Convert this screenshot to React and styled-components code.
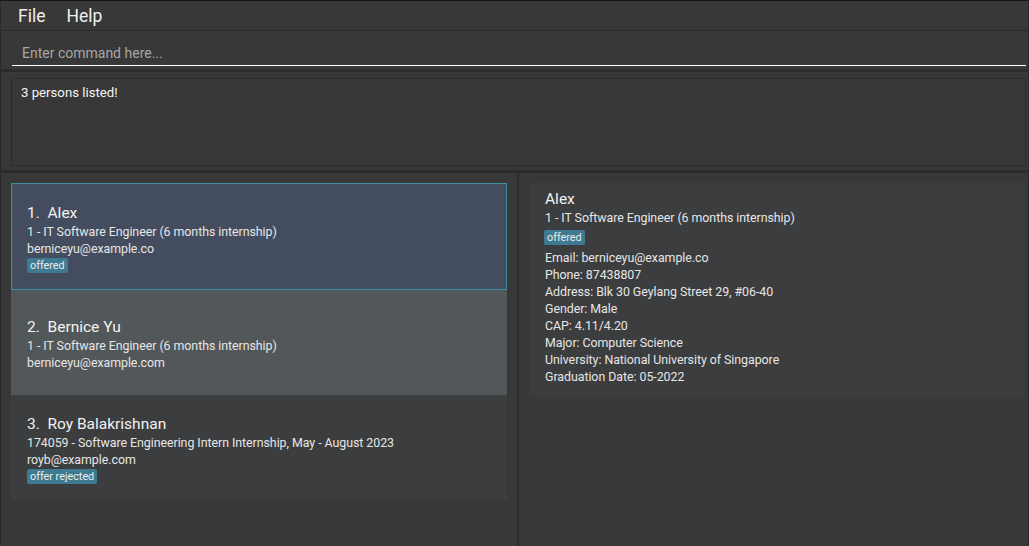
import React from "react";
import styled, { createGlobalStyle } from "styled-components";

const GlobalStyle = createGlobalStyle`
  html, body {
    margin: 0;
    padding: 0;
    background: #383838;
  }
  body {
    font-family: Roboto, "Liberation Sans", sans-serif;
  }
`;

const persons = [
  {
    name: "Alex",
    job: "1 - IT Software Engineer (6 months internship)",
    email: "berniceyu@example.co",
    tag: "offered",
    selected: true,
  },
  {
    name: "Bernice Yu",
    job: "1 - IT Software Engineer (6 months internship)",
    email: "berniceyu@example.com",
    hover: true,
  },
  {
    name: "Roy Balakrishnan",
    job: "174059 - Software Engineering Intern Internship, May - August 2023",
    email: "royb@example.com",
    tag: "offer rejected",
  },
];

const details = [
  "Email: berniceyu@example.co",
  "Phone: 87438807",
  "Address: Blk 30 Geylang Street 29, #06-40",
  "Gender: Male",
  "CAP: 4.11/4.20",
  "Major: Computer Science",
  "University: National University of Singapore",
  "Graduation Date: 05-2022",
];

function PersonCard(props) {
  return (
    <Card selected={props.selected} hover={props.hover}>
      <Name>
        {props.index}.&nbsp;&nbsp;{props.name}
      </Name>
      <Line>{props.job}</Line>
      <Line>{props.email}</Line>
      {props.tag && <Tag>{props.tag}</Tag>}
    </Card>
  );
}

export default function App() {
  return (
    <Window>
      <GlobalStyle />
      <MenuBar>
        <MenuItem>File</MenuItem>
        <MenuItem>Help</MenuItem>
      </MenuBar>
      <CommandBox>
        <CommandInput placeholder="Enter command here..." />
      </CommandBox>
      <ResultDisplay>
        <ResultBox>3 persons listed!</ResultBox>
      </ResultDisplay>
      <Main>
        <ListPanel>
          {persons.map((p, i) => (
            <PersonCard key={p.name} index={i + 1} {...p} />
          ))}
        </ListPanel>
        <DetailPanel>
          <DetailCard>
            <Name>Alex</Name>
            <Line>1 - IT Software Engineer (6 months internship)</Line>
            <DetailTag>offered</DetailTag>
            {details.map((d) => (
              <Line key={d}>{d}</Line>
            ))}
          </DetailCard>
        </DetailPanel>
      </Main>
    </Window>
  );
}

const Window = styled.div`
  height: 546px;
  display: flex;
  flex-direction: column;
  background: #383838;
  border-top: 1px solid #161616;
  border-left: 1px solid #2b2b2b;
  border-right: 1px solid #2b2b2b;
  box-sizing: border-box;
  overflow: hidden;
`;

const MenuBar = styled.div`
  height: 30px;
  display: flex;
  align-items: center;
  gap: 21px;
  padding-left: 17px;
  padding-top: 1px;
  box-sizing: border-box;
  border-bottom: 1px solid #2b2b2b;
  flex-shrink: 0;
`;

const MenuItem = styled.span`
  color: #f0f0f0;
  font-size: 17.5px;
`;

const CommandBox = styled.div`
  height: 38px;
  padding: 0 2px 0 11px;
  display: flex;
  align-items: flex-end;
  border-bottom: 3px solid #2b2b2b;
  flex-shrink: 0;
`;

const CommandInput = styled.input`
  width: 100%;
  height: 30px;
  margin-bottom: 3px;
  box-sizing: border-box;
  background: transparent;
  border: none;
  border-bottom: 1px solid #ffffff;
  outline: none;
  padding: 4px 0 0 10px;
  font-family: Roboto, "Liberation Sans", sans-serif;
  font-size: 14px;
  color: #ffffff;
  &::placeholder {
    color: #a6a6a6;
  }
`;

const ResultDisplay = styled.div`
  height: 101px;
  padding: 6px 2px 4px 10px;
  box-sizing: border-box;
  border-bottom: 3px solid #2b2b2b;
  flex-shrink: 0;
  display: flex;
`;

const ResultBox = styled.div`
  flex: 1;
  border: 1px solid #2b2b2b;
  padding: 6px 9px;
  color: #f4f4f4;
  font-size: 13.2px;
`;

const Main = styled.div`
  flex: 1;
  display: flex;
  min-height: 0;
`;

const ListPanel = styled.div`
  width: 518px;
  padding: 10px;
  box-sizing: border-box;
  border-right: 2px solid #2b2b2b;
  display: flex;
  flex-direction: column;
`;

const Card = styled.div`
  height: ${(p) => (p.selected ? "107px" : "105px")};
  flex-shrink: 0;
  box-sizing: border-box;
  padding: 4px 15px 0;
  display: flex;
  flex-direction: column;
  justify-content: center;
  background: ${(p) => (p.selected ? "#434d5f" : p.hover ? "#52575a" : "#3c3d3f")};
  border: 1px solid ${(p) => (p.selected ? "#3d8ea1" : "transparent")};
`;

const Name = styled.div`
  color: #f2f2f2;
  font-size: 15.5px;
  line-height: 19px;
`;

const Line = styled.div`
  color: #e6e6e6;
  font-size: 12.4px;
  letter-spacing: -0.05px;
  line-height: 17px;
`;

const Tag = styled.span`
  align-self: flex-start;
  margin-top: 1px;
  background: #3e7b91;
  color: #ececec;
  font-size: 10.8px;
  line-height: 15px;
  padding: 0 3px;
  border-radius: 2px;
`;

const DetailTag = styled(Tag)`
  margin: 4px 0 4px -1px;
`;

const DetailPanel = styled.div`
  flex: 1;
  padding: 10px 3px 10px 10px;
`;

const DetailCard = styled.div`
  background: #3c3d3f;
  padding: 7px 16px 12px;
  display: flex;
  flex-direction: column;
`;
